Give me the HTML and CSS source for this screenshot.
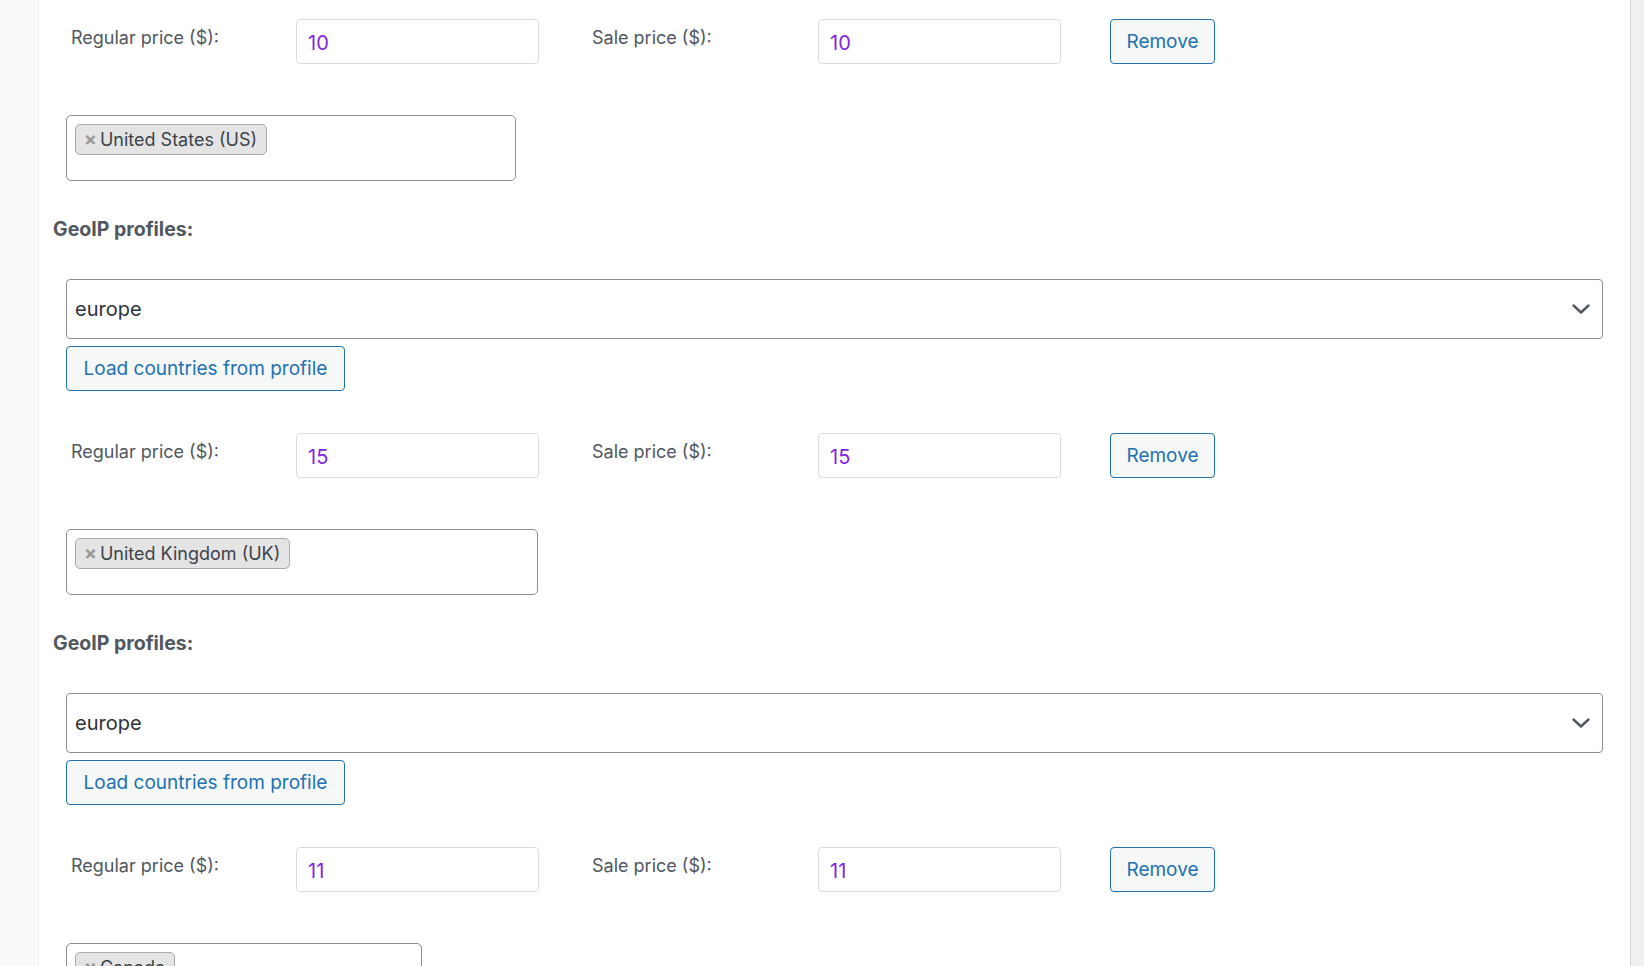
FILE: index.html
```html
<!DOCTYPE html>
<html lang="en">
<head>
<meta charset="utf-8">
<title>GeoIP pricing</title>
<link rel="stylesheet" href="styles.css">
</head>
<body>
<div class="screen">
  <div class="tabs"></div>
  <main class="panel">

    <div class="price-row">
      <label class="price-label">Regular price ($):</label>
      <input class="price-input" type="text" value="10">
      <label class="price-label sale">Sale price ($):</label>
      <input class="price-input" type="text" value="10">
      <button class="wp-btn remove">Remove</button>
    </div>
    <div class="countries countries-us">
      <span class="tag"><span class="tag-x">×</span>United States (US)</span>
    </div>

    <h3 class="geo-heading">GeoIP profiles:</h3>
    <div class="select">
      <span class="select-value">europe</span>
      <svg class="chevron" width="18" height="10" viewBox="0 0 18 10"><polyline points="1.5,1.5 9,8.5 16.5,1.5" fill="none" stroke="#50575e" stroke-width="2.4" stroke-linecap="round" stroke-linejoin="round"/></svg>
    </div>
    <button class="wp-btn load">Load countries from profile</button>

    <div class="price-row">
      <label class="price-label">Regular price ($):</label>
      <input class="price-input" type="text" value="15">
      <label class="price-label sale">Sale price ($):</label>
      <input class="price-input" type="text" value="15">
      <button class="wp-btn remove">Remove</button>
    </div>
    <div class="countries countries-uk">
      <span class="tag"><span class="tag-x">×</span>United Kingdom (UK)</span>
    </div>

    <h3 class="geo-heading">GeoIP profiles:</h3>
    <div class="select">
      <span class="select-value">europe</span>
      <svg class="chevron" width="18" height="10" viewBox="0 0 18 10"><polyline points="1.5,1.5 9,8.5 16.5,1.5" fill="none" stroke="#50575e" stroke-width="2.4" stroke-linecap="round" stroke-linejoin="round"/></svg>
    </div>
    <button class="wp-btn load">Load countries from profile</button>

    <div class="price-row">
      <label class="price-label">Regular price ($):</label>
      <input class="price-input" type="text" value="11">
      <label class="price-label sale">Sale price ($):</label>
      <input class="price-input" type="text" value="11">
      <button class="wp-btn remove">Remove</button>
    </div>
    <div class="countries countries-ca">
      <span class="tag"><span class="tag-x">×</span>Canada</span>
    </div>

  </main>
  <div class="gutter"></div>
</div>
</body>
</html>
```

FILE: styles.css
```css
* { box-sizing: border-box; }

html, body {
  margin: 0;
  padding: 0;
  height: 966px;
  overflow: hidden;
  background: #fff;
  font-family: Inter, "Noto Sans", "Liberation Sans", sans-serif;
  color: #50575e;
}

.screen {
  display: flex;
  height: 966px;
}

.tabs {
  width: 39px;
  flex: none;
  background: #fafafa;
  border-right: 1px solid #eeeeee;
}

.gutter {
  width: 14px;
  flex: none;
  background: #f0f0f1;
  border-left: 1px solid #dcdcde;
}

.panel {
  flex: 1;
  display: flex;
  flex-direction: column;
  align-items: flex-start;
  padding: 19px 27px 0 27px;
  background: #fff;
  overflow: hidden;
}

.panel > * { flex-shrink: 0; }

.price-row {
  display: flex;
  align-items: flex-start;
  height: 45px;
  padding-left: 5px;
}

.price-label {
  font-size: 18px;
  line-height: 22px;
  padding-top: 8px;
  color: #50575e;
  width: 225px;
  flex: none;
}

.price-label.sale {
  margin-left: 53px;
  width: 226px;
}

.price-input {
  width: 243px;
  height: 45px;
  flex: none;
  border: 1px solid #dcdcde;
  border-radius: 4px;
  padding: 3px 11px 0 11px;
  font-family: inherit;
  font-size: 20px;
  color: #8224e3;
  background: #fff;
  outline: none;
}

.wp-btn {
  font-family: inherit;
  font-size: 19px;
  color: #2271b1;
  background: #f6f7f7;
  border: 1px solid #2271b1;
  border-radius: 4px;
  padding: 0 15px;
  height: 45px;
  cursor: pointer;
}

.remove {
  margin-left: 49px;
  width: 105px;
}

.countries {
  margin-top: 51px;
  height: 66px;
  border: 1px solid #8c8f94;
  border-radius: 5px;
  padding: 8px 8px;
  display: flex;
  align-items: flex-start;
}

.countries-us { width: 450px; }
.countries-uk { width: 472px; }
.countries-ca { width: 356px; }

.tag {
  display: inline-flex;
  align-items: center;
  height: 31px;
  padding: 0 9px 0 8px;
  background: #e4e4e4;
  border: 1px solid #aaaaaa;
  border-radius: 5px;
  font-size: 18px;
  color: #3c434a;
}

.tag-x {
  color: #999999;
  font-weight: 700;
  font-size: 19px;
  margin-right: 3px;
}

.geo-heading {
  margin: 36px 0 38px -13px;
  font-size: 19.5px;
  line-height: 24px;
  font-weight: 700;
  color: #50575e;
}

.select {
  align-self: stretch;
  height: 60px;
  border: 1px solid #8c8f94;
  border-radius: 4px;
  display: flex;
  align-items: center;
  justify-content: space-between;
  padding: 0 12px 0 8px;
  background: #fff;
}

.select-value {
  font-size: 20px;
  color: #2c3338;
}

.chevron {
  display: block;
}

.load {
  margin-top: 7px;
  margin-bottom: 42px;
  width: 279px;
  padding: 0 14px;
}
```
